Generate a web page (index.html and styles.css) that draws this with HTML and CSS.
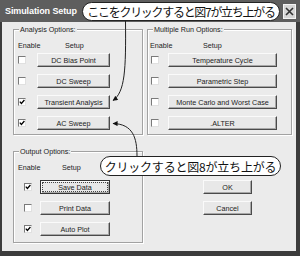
FILE: index.html
```html
<!DOCTYPE html>
<html>
<head>
<meta charset="utf-8">
<link rel="stylesheet" href="styles.css">
</head>
<body>
<div class="window">
  <div class="titlebar">
    <span class="title">Simulation Setup</span>
    <span class="close"><svg width="11" height="11" viewBox="0 0 11 11"><path d="M2 2 L9 9 M9 2 L2 9" stroke="#333" stroke-width="1.6"/></svg></span>
  </div>
  <div class="client">
    <div class="row">
      <div class="group g-top g-analysis">
        <span class="legend">Analysis Options:</span>
        <div class="head"><span class="h-enable">Enable</span><span>Setup</span></div>
        <div class="items">
          <div class="item"><span class="cb"></span><span class="btn">DC Bias Point</span></div>
          <div class="item"><span class="cb"></span><span class="btn">DC Sweep</span></div>
          <div class="item"><span class="cb"><svg width="6" height="6" viewBox="0 0 6 6"><path d="M0.8 2.6 L2.4 4.4 L5.4 1" fill="none" stroke="#000" stroke-width="1.3"/></svg></span><span class="btn">Transient Analysis</span></div>
          <div class="item"><span class="cb"><svg width="6" height="6" viewBox="0 0 6 6"><path d="M0.8 2.6 L2.4 4.4 L5.4 1" fill="none" stroke="#000" stroke-width="1.3"/></svg></span><span class="btn">AC Sweep</span></div>
        </div>
      </div>
      <div class="group g-top g-multi">
        <span class="legend">Multiple Run Options:</span>
        <div class="head"><span class="h-enable">Enable</span><span>Setup</span></div>
        <div class="items">
          <div class="item"><span class="cb"></span><span class="btn">Temperature Cycle</span></div>
          <div class="item"><span class="cb"></span><span class="btn">Parametric Step</span></div>
          <div class="item"><span class="cb"></span><span class="btn">Monte Carlo and Worst Case</span></div>
          <div class="item"><span class="cb"></span><span class="btn">.ALTER</span></div>
        </div>
      </div>
    </div>
    <div class="row">
      <div class="group g-output">
        <span class="legend">Output Options:</span>
        <div class="head"><span class="h-enable">Enable</span><span>Setup</span></div>
        <div class="items">
          <div class="item"><span class="cb"><svg width="6" height="6" viewBox="0 0 6 6"><path d="M0.8 2.6 L2.4 4.4 L5.4 1" fill="none" stroke="#000" stroke-width="1.3"/></svg></span><span class="btn focus">Save Data</span></div>
          <div class="item"><span class="cb"></span><span class="btn">Print Data</span></div>
          <div class="item"><span class="cb"><svg width="6" height="6" viewBox="0 0 6 6"><path d="M0.8 2.6 L2.4 4.4 L5.4 1" fill="none" stroke="#000" stroke-width="1.3"/></svg></span><span class="btn">Auto Plot</span></div>
        </div>
      </div>
      <div class="side">
        <span class="btn dlg">OK</span>
        <span class="btn dlg">Cancel</span>
      </div>
    </div>
  </div>
  <svg class="arrows" width="300" height="256" viewBox="0 0 300 256">
    <defs>
      <marker id="ah" viewBox="0 0 6 6" refX="5.5" refY="3" markerWidth="6" markerHeight="5" orient="auto">
        <path d="M0 0 L6 3 L0 6 z" fill="#111"/>
      </marker>
    </defs>
    <path d="M125.5 21 C126 70 125 92 113 100.5" fill="none" stroke="#222" stroke-width="1" marker-end="url(#ah)"/>
    <path d="M137 156 C137 138 133 124 113 123.5" fill="none" stroke="#222" stroke-width="1" marker-end="url(#ah)"/>
  </svg>
  <div class="callout c1">ここをクリックすると図7が立ち上がる</div>
  <div class="callout c2">クリックすると図8が立ち上がる</div>
</div>
</body>
</html>
```

FILE: styles.css
```css
* { box-sizing: border-box; }
html, body { margin: 0; padding: 0; background: #fff; }
body {
  font-family: "Liberation Sans", Arial, sans-serif;
  font-size: 7.2px;
  color: #222;
}
.window {
  position: relative;
  width: 300px;
  height: 256px;
  background: #3c3c3c;
  display: flex;
  flex-direction: column;
  overflow: hidden;
}
.titlebar {
  height: 22px;
  flex: none;
  background: #5e5e5e;
  display: flex;
  align-items: center;
  justify-content: space-between;
  padding: 0 4px 0 5px;
}
.title {
  color: #fff;
  font-weight: bold;
  font-size: 9px;
  letter-spacing: -0.1px;
}
.close {
  width: 13px;
  height: 15px;
  background: #d6d6d6;
  border: 1px solid #f4f4f4;
  display: flex;
  align-items: center;
  justify-content: center;
}
.client {
  flex: 1;
  margin: 0 4px 5px 2px;
  background: #ebebeb;
  padding: 7px 0 0 11px;
  display: flex;
  flex-direction: column;
  gap: 16px;
}
.row {
  display: grid;
  grid-template-columns: 130px 145px;
  column-gap: 4px;
  align-items: start;
}
.group {
  position: relative;
  border: 1px solid #a2a2a2;
  box-shadow: inset 1px 1px 0 #fff, 1px 1px 0 #fff;
}
.g-top { height: 106px; }
.g-output { height: 92px; }
.g-analysis { --cbx: 4px; --btnx: 23px; --btnw: 73px; --ex: 4px; --sx: 51px; --itop: 2px; }
.g-multi { --cbx: 3px; --btnx: 20px; --btnw: 109px; --ex: 2px; --sx: 55px; --itop: 2px; }
.g-output { --cbx: 10px; --btnx: 26px; --btnw: 70px; --ex: 4px; --sx: 48px; --itop: 7px; }
.legend {
  position: absolute;
  top: -5px;
  left: 5px;
  padding: 0 1px;
  background: #ebebeb;
  line-height: 9px;
}
.head {
  display: flex;
  height: 10px;
  line-height: 10px;
  margin-top: 11px;
  padding-left: var(--ex);
}
.h-enable { width: calc(var(--sx) - var(--ex)); }
.items {
  display: flex;
  flex-direction: column;
  gap: 7px;
  margin-top: var(--itop);
}
.item {
  display: flex;
  align-items: center;
  height: 14px;
  padding-left: var(--cbx);
}
.cb {
  flex: none;
  width: 8px;
  height: 8px;
  background: #fff;
  border: 1px solid;
  border-color: #7a7a7a #e0e0e0 #e0e0e0 #7a7a7a;
  margin-right: calc(var(--btnx) - var(--cbx) - 8px);
  display: flex;
  align-items: center;
  justify-content: center;
}
.btn {
  flex: none;
  width: var(--btnw);
  height: 14px;
  background: #e8e8e8;
  border: 1px solid;
  border-color: #fafafa #4a4a4a #4a4a4a #fafafa;
  box-shadow: inset -1px -1px 0 #a8a8a8;
  display: flex;
  align-items: center;
  justify-content: center;
  white-space: nowrap;
}
.focus {
  border-color: #333;
  box-shadow: inset 1px 1px 0 #fafafa, inset -1px -1px 0 #a8a8a8;
  outline: 1px dotted #444;
  outline-offset: -3px;
}
.side {
  display: flex;
  flex-direction: column;
  gap: 7px;
  padding: 29px 0 0 56px;
}
.dlg { width: 49px; }
.arrows {
  position: absolute;
  left: 0;
  top: 0;
  pointer-events: none;
}
.callout {
  position: absolute;
  background: #fff;
  border: 1px solid #222;
  border-radius: 10px;
  font-family: "Noto Sans CJK JP", sans-serif;
  color: #111;
  display: flex;
  align-items: center;
  justify-content: center;
  white-space: nowrap;
}
.c1 {
  left: 82px;
  top: 2px;
  width: 198px;
  height: 19px;
  font-size: 12px;
  letter-spacing: -1.3px;
}
.c2 {
  left: 100px;
  top: 156px;
  width: 181px;
  height: 20px;
  font-size: 12px;
  letter-spacing: -0.2px;
}
```
